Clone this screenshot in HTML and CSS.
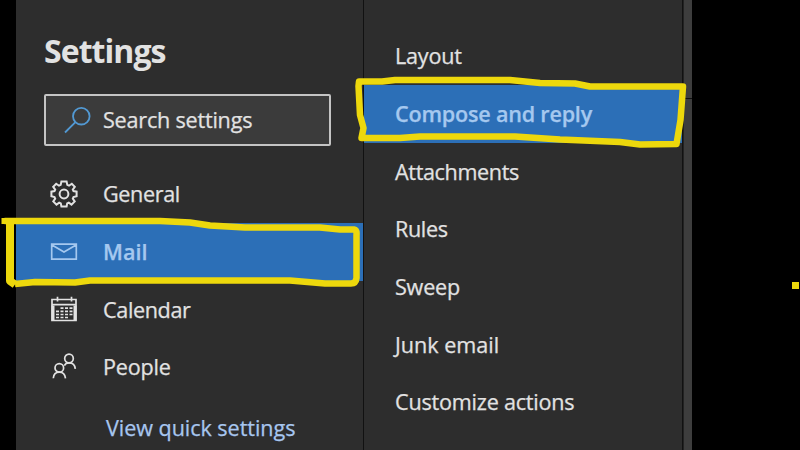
FILE: index.html
```html
<!DOCTYPE html>
<html lang="en">
<head>
<meta charset="utf-8">
<title>Settings</title>
<link rel="stylesheet" href="styles.css">
</head>
<body>
<main class="settings">
  <aside class="sidebar">
    <h1 class="title">Settings</h1>
    <div class="search">
      <svg class="search-icon" width="28" height="28" viewBox="0 0 28 28"><circle cx="17.3" cy="10.2" r="8.3"/><path d="M11.4 16.1 1 26.5"/></svg>
      <span class="tight">Search settings</span>
    </div>
    <nav class="menu">
      <a class="item">
        <svg class="icon" width="28" height="28" viewBox="-14 -14 28 28"><path class="gear" d="M-2.6-12.4H2.6L3.3-9.1 5-8.3 7.8-10.3 10.8-7.1 8.8-4.3 9.5-2.9 12.6-2.3V2.3L9.5 3 8.8 4.6 10.7 7.4 7.5 10.6 4.8 8.7 3.2 9.4 2.6 12.5H-2.6L-3.2 9.4-4.8 8.7-7.5 10.6-10.7 7.4-8.8 4.6-9.5 3-12.6 2.3V-2.3L-9.5-2.9-8.8-4.3-10.8-7.1-7.8-10.3-5-8.3-3.3-9.1Z"/><circle class="gear" r="4.4"/></svg>
        <span class="tighter">General</span>
      </a>
      <a class="item selected">
        <svg class="icon" width="28" height="28" viewBox="0 0 28 28"><path d="M1.7 6.1H26.3V21.2H1.7ZM2 7 14 14 26 7"/></svg>
        <span>Mail</span>
      </a>
      <a class="item">
        <svg class="icon" width="28" height="28" viewBox="0 0 28 28"><path d="M2 3.500H26V24.500H2ZM2 8.700H26M7.5 0.800V5.500M21.5 0.800V5.500"/><path class="edge" d="M3 9.500V24.500M25 9.500V24.500"/><path class="days" d="M10.5 12.100H23M6 15.300H23M6 18.500H23M6 21.500H19"/></svg>
        <span class="tighter">Calendar</span>
      </a>
      <a class="item">
        <svg class="icon" width="28" height="28" viewBox="0 0 28 28"><circle cx="19" cy="5.500" r="4.300"/><circle cx="9.300" cy="14.900" r="4.300"/><path d="M3.300 25.300C3.600 21.500 5.600 19.200 9.300 19.200S15 21.500 15.500 25.300M14.300 12.700C15.200 10.700 16.800 9.800 19 9.800 22.700 9.800 25 12.100 25.300 15.900"/></svg>
        <span class="tight">People</span>
      </a>
    </nav>
    <a class="quick">View quick settings</a>
  </aside>
  <nav class="submenu">
    <a class="item"><span class="tight">Layout</span></a>
    <a class="item selected"><span class="tight">Compose and reply</span></a>
    <a class="item"><span class="tighter">Attachments</span></a>
    <a class="item"><span class="tighter">Rules</span></a>
    <a class="item"><span class="tight">Sweep</span></a>
    <a class="item"><span>Junk email</span></a>
    <a class="item"><span class="tight">Customize actions</span></a>
  </nav>
  <div class="pane-edge"></div>
</main>
<svg class="marks" width="800" height="450" viewBox="0 0 800 450">
  <path d="M359 81.500H382L395 80H510L540 83 575 83.500 590 86.500H683L680.500 120 676.500 144 640 144.500 620 142 560 139.500 515 136.500H420L400 138H361.500L363.500 128 360 115 358.500 86Z"/>
  <path d="M4.500 221H160L190 222.500 210 225.500 245 227.500H320L340 229.500H354Q357 230 356.500 235V278Q356 283.500 351 283.500H325L290 280.500H90L75 282.500 35 282 15 284"/>
  <path class="thick" d="M10 222V281L15 284.500"/>
  <rect class="dot" x="1.500" y="218" width="6" height="6"/>
  <rect class="dot" x="792" y="282" width="7" height="7"/>
</svg>
</body>
</html>
```
FILE: styles.css
```css
* { box-sizing: border-box; }
body {
  margin: 0;
  width: 800px;
  height: 450px;
  overflow: hidden;
  background: #000;
  color: #e2e2e2;
  font-family: "Open Sans", "Noto Sans", sans-serif;
  font-size: 21.6px;
  line-height: 30px;
  white-space: nowrap;
  -webkit-text-stroke: 0.25px currentColor;
}
.settings {
  display: flex;
  width: 676px;
  height: 450px;
  margin-left: 16px;
  background: #2d2d2d;
}
.sidebar {
  width: 348px;
  border-right: 1px solid #111;
}
.title {
  margin: 0;
  padding: 29px 0 0 28px;
  height: 94px;
  font-size: 32px;
  line-height: 44px;
  font-weight: 700;
  letter-spacing: -0.95px;
  -webkit-text-stroke: 0;
}
.tight { letter-spacing: -0.22px; }
.tighter { letter-spacing: -0.36px; }
.search {
  display: flex;
  align-items: center;
  width: 287px;
  height: 52px;
  margin-left: 28px;
  padding-left: 18px;
  gap: 12px;
  border: 2px solid #c4c4c4;
  border-radius: 2px;
  background: #3b3b3b;
}
svg { fill: none; stroke: currentColor; stroke-width: 1.700; flex: none; }
.search-icon { stroke: #5299d3; stroke-width: 1.800; }
.search .tight { margin-left: -1px; }
.menu { padding-top: 19.300px; }
.item {
  display: flex;
  align-items: center;
  height: 57.700px;
}
.menu .item { padding-left: 34px; gap: 25px; }
.selected {
  background: #2c6fb7;
  color: #a5c8ef;
  font-weight: 600;
}
.gear { stroke-width: 2; }
.edge { stroke-width: 3; }
.days { stroke-width: 1.700; stroke-dasharray: 3 1.500; }
.quick { display: block; padding: 17px 0 0 90px; color: #a7c6ef; letter-spacing: -0.06px; }
.submenu {
  width: 319px;
  padding-top: 27.300px;
}
.submenu .item { padding-left: 31px; }
.pane-edge {
  width: 9px;
  border-left: 1px solid #222;
  background: linear-gradient(#111, #111) 0 98px / 9px 1px no-repeat #3d3d3d;
}
.submenu { border-right: 1px solid #111; }
.marks {
  position: absolute;
  left: 0;
  top: 0;
  stroke: #edd80c;
  stroke-width: 6.500;
  stroke-linejoin: round;
  pointer-events: none;
}
.thick { stroke-width: 8; }
.dot { fill: #edd80c; stroke: none; }
```
